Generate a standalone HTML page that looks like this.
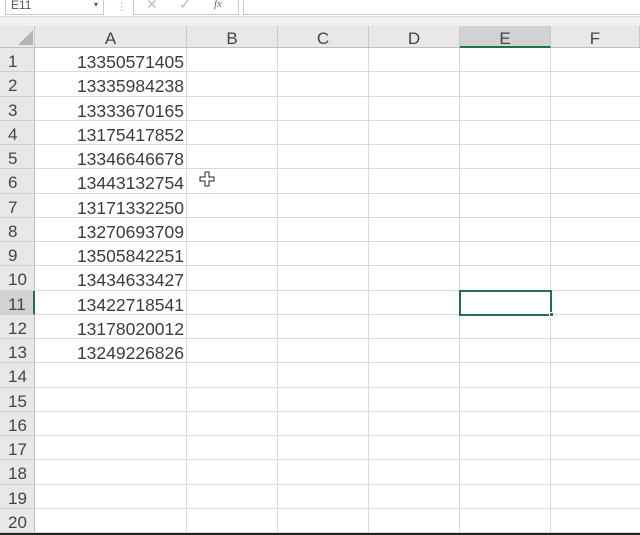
<!DOCTYPE html><html><head><style>
body{margin:0;width:640px;height:535px;overflow:hidden;background:#fff;font-family:"Liberation Sans",sans-serif;position:relative}
div{position:absolute;box-sizing:border-box}
.n{color:#3c3c3c;font-size:17.5px;text-align:right;padding-right:3px;line-height:28px}
.rh{color:#444;font-size:17px;line-height:28px;padding-left:8px;background:#e8e8e8;border-bottom:1px solid #d0d0d0;border-right:1px solid #bdbdbd;overflow:hidden}
.ch{color:#444;font-size:17px;text-align:center;line-height:26px;top:26px;height:22px;background:#e8e8e8;border-right:1px solid #c8c8c8;border-bottom:1px solid #c0c0c0;overflow:hidden}
.hl{left:35px;width:605px;height:1px;background:#dadada}
.vl{top:48px;height:486px;width:1px;background:#dadada}
</style></head><body>
<div style="left:0;top:0;width:640px;height:16px;background:#fff"></div>
<div style="left:0;top:16px;width:640px;height:10px;background:#f0f0f0;border-top:1px solid #ddd"></div>
<div style="left:5px;top:-2px;width:99px;height:17px;border:1px solid #c8c8c8;background:#fff;font-size:12px;color:#555;padding-left:5px;line-height:12px">E11<span style="position:absolute;left:88px;top:0;font-size:8px">▾</span></div>
<div style="left:116px;top:0;color:#bbb;font-size:11px">⋮</div>
<div style="left:133px;top:-2px;width:106px;height:17px;border:1px solid #c8c8c8;background:#fff;color:#bbb;font-size:14px;line-height:10px"><span style="position:absolute;left:12px">✕</span><span style="position:absolute;left:45px">✓</span><span style="position:absolute;left:80px;font-style:italic;font-family:'Liberation Serif';font-size:11px;color:#666">fx</span></div>
<div style="left:243px;top:-2px;width:400px;height:17px;border:1px solid #c8c8c8;background:#fff"></div>
<div style="left:0;top:26px;width:35px;height:22px;background:#e8e8e8;border-right:1px solid #c8c8c8;border-bottom:1px solid #c0c0c0"></div>
<svg style="position:absolute;left:17px;top:30px" width="16" height="16"><polygon points="16,0 16,15 1,15" fill="#b4b4b4"/></svg>
<div class="ch" style="left:35px;width:152px">A</div>
<div class="ch" style="left:187px;width:91px">B</div>
<div class="ch" style="left:278px;width:91px">C</div>
<div class="ch" style="left:369px;width:91px">D</div>
<div class="ch" style="left:460px;width:91px;background:#d2d2d2;border-bottom:2px solid #217346">E</div>
<div class="ch" style="left:551px;width:89px">F</div>
<div id="g"></div>
<script>
var h='',nums=["13350571405","13335984238","13333670165","13175417852","13346646678","13443132754","13171332250","13270693709","13505842251","13434633427","13422718541","13178020012","13249226826"];
for(var i=0;i<20;i++){var t=Math.round(48+24.25*i),b=Math.round(48+24.25*(i+1));
var s=i==10?'background:#d2d2d2;border-right:2px solid #217346;':'';
h+='<div class="rh" style="left:0;top:'+t+'px;width:35px;height:'+(b-t)+'px;'+s+'">'+(i+1)+'</div>';
h+='<div class="hl" style="top:'+(b-1)+'px"></div>';
if(nums[i])h+='<div class="n" style="left:35px;top:'+t+'px;width:152px;height:'+(b-t)+'px">'+nums[i]+'</div>';}
[186,277,368,459,550].forEach(function(x){h+='<div class="vl" style="left:'+x+'px"></div>'});
document.getElementById('g').outerHTML=h;
</script>
<div style="left:459px;top:290px;width:93px;height:26px;border:2px solid #217346"></div>
<div style="left:549px;top:312px;width:5px;height:5px;background:#217346;border:1px solid #fff"></div>
<div style="left:0;top:533px;width:640px;height:2px;background:#222"></div>
<svg style="position:absolute;left:199px;top:171px" width="16" height="16"><path d="M6 1h4v5h5v4h-5v5H6v-5H1V6h5z" fill="#fff" stroke="#222" stroke-width="1"/></svg>
</body></html>
